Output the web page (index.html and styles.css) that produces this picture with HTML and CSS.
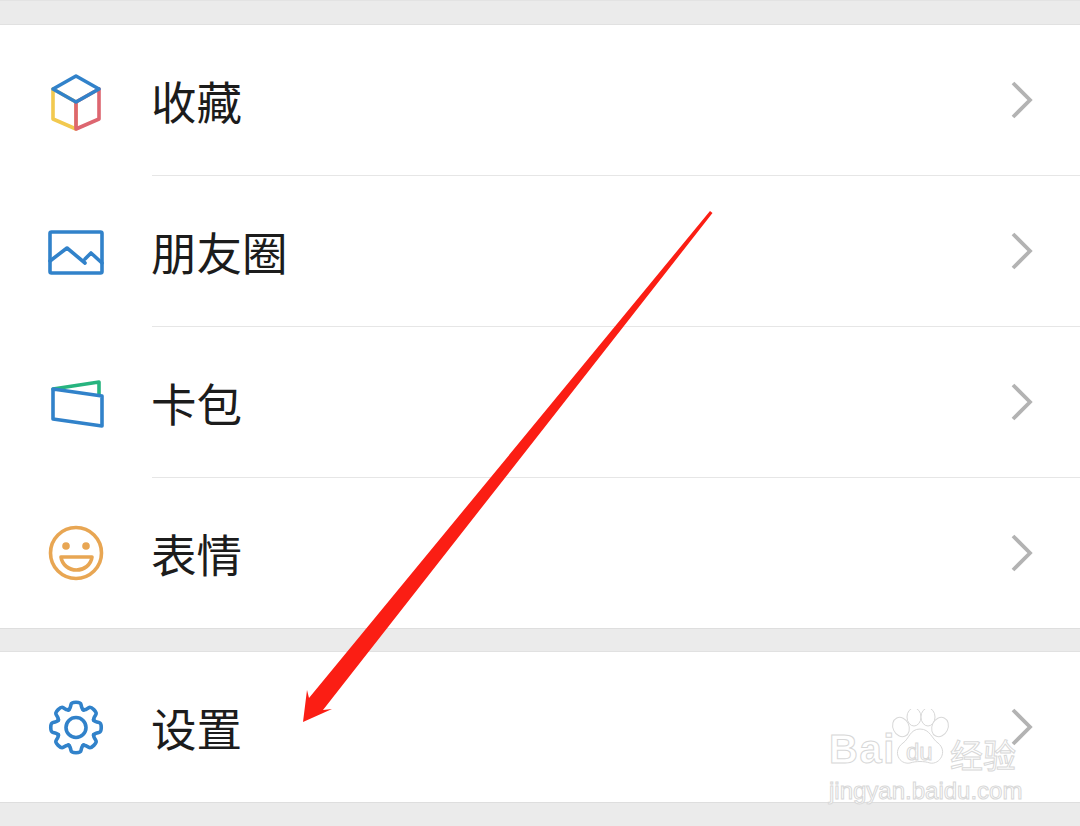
FILE: index.html
```html
<!DOCTYPE html>
<html lang="zh-CN">
<head>
    <meta charset="UTF-8">
    <title>我</title>
    <link rel="stylesheet" href="styles.css">
</head>
<body>
    <div id="page">
        <div class="gap gap-top"></div>
        <div class="group">
            <div class="row">
                <svg class="icon" viewBox="0 0 60 60" width="60" height="60">
                    <path class="line" stroke="#f2c94f" d="M7 18V48L30 58V31Z"/>
                    <path class="line" stroke="#dd6670" d="M53 18V48L30 58V31Z"/>
                    <path class="line" stroke="#3182ca" d="M30 5L7 18L30 31L53 18Z"/>
                </svg>
                <div class="row-body">
                    <span class="label">收藏</span>
                    <svg class="chevron" viewBox="0 0 22 38" width="22" height="38"><path d="M2 2L19 19L2 36"/></svg>
                </div>
            </div>
            <div class="row">
                <svg class="icon" viewBox="0 0 60 60" width="60" height="60">
                    <rect class="line" stroke="#3182ca" x="4" y="10" width="52" height="41" rx="1.5"/>
                    <path class="line" stroke="#3182ca" d="M4 39L21 26L39 41M39 37L45 31L56 41"/>
                </svg>
                <div class="row-body">
                    <span class="label">朋友圈</span>
                    <svg class="chevron" viewBox="0 0 22 38" width="22" height="38"><path d="M2 2L19 19L2 36"/></svg>
                </div>
            </div>
            <div class="row">
                <svg class="icon" viewBox="0 0 60 60" width="60" height="60">
                    <path class="line" stroke="#27b47f" d="M7 16L53 9V22"/>
                    <path class="line" stroke="#3182ca" d="M7 16L56 23V53L7 46Z"/>
                </svg>
                <div class="row-body">
                    <span class="label">卡包</span>
                    <svg class="chevron" viewBox="0 0 22 38" width="22" height="38"><path d="M2 2L19 19L2 36"/></svg>
                </div>
            </div>
            <div class="row row-last">
                <svg class="icon" viewBox="0 0 60 60" width="60" height="60">
                    <circle class="line" stroke="#e8a653" cx="30" cy="30" r="25.5"/>
                    <circle fill="#e8a653" cx="20" cy="23" r="3.8"/>
                    <circle fill="#e8a653" cx="40" cy="23" r="3.8"/>
                    <path class="line" stroke="#e8a653" d="M15 34H46C45 42 38 47 30.500 47C23 47 16 42 15 34Z"/>
                </svg>
                <div class="row-body">
                    <span class="label">表情</span>
                    <svg class="chevron" viewBox="0 0 22 38" width="22" height="38"><path d="M2 2L19 19L2 36"/></svg>
                </div>
            </div>
        </div>
        <div class="gap gap-mid"></div>
        <div class="group">
            <div class="row row-last">
                <svg class="icon" viewBox="0 0 60 60" width="60" height="60">
                    <defs>
                        <path id="tooth" d="M-7.500 -17.500C-6 -18.500 -5.500 -20 -5 -23C-4.500 -26 4.500 -26 5 -23C5.500 -20 6 -18.500 7.500 -17.500"/>
                    </defs>
                    <g class="line" stroke="#3182ca" transform="translate(30 30.500)">
                        <use href="#tooth"/>
                        <use href="#tooth" transform="rotate(45)"/>
                        <use href="#tooth" transform="rotate(90)"/>
                        <use href="#tooth" transform="rotate(135)"/>
                        <use href="#tooth" transform="rotate(180)"/>
                        <use href="#tooth" transform="rotate(225)"/>
                        <use href="#tooth" transform="rotate(270)"/>
                        <use href="#tooth" transform="rotate(315)"/>
                        <circle r="10"/>
                    </g>
                </svg>
                <div class="row-body">
                    <span class="label">设置</span>
                    <svg class="chevron" viewBox="0 0 22 38" width="22" height="38"><path d="M2 2L19 19L2 36"/></svg>
                </div>
            </div>
        </div>
        <div class="gap gap-bottom"></div>

        <!-- red arrow drawn over the screenshot -->
        <svg class="arrow" viewBox="0 0 1080 826" width="1080" height="826">
            <path d="M710 211L712.500 213L323 710L332 709L303 722L307 690L309 698Z"/>
        </svg>

        <div class="watermark">
            <div class="wm-top">
                <span class="wm-bai">Bai</span>
                <svg class="wm-paw" viewBox="0 0 60 60" width="60" height="60">
                    <ellipse cx="11" cy="18" rx="8" ry="10" transform="rotate(-25 11 18)"/>
                    <ellipse cx="24" cy="8" rx="7" ry="9"/>
                    <ellipse cx="38" cy="8" rx="7" ry="9"/>
                    <ellipse cx="50" cy="18" rx="8" ry="10" transform="rotate(25 50 18)"/>
                    <path d="M30 20C40 20 42 30 48 34C58 42 50 56 40 54C34 52 26 52 20 54C9 56 2 42 13 34C19 30 20 20 30 20Z"/>
                </svg>
                <span class="wm-du">du</span>
                <span class="wm-cn">经验</span>
            </div>
            <div class="wm-url">jingyan.baidu.com</div>
        </div>
    </div>
</body>
</html>
```

FILE: styles.css
```css
body {
    margin: 0;
    background-color: #ebebeb;
    font-family: "Noto Sans CJK SC", "Noto Sans", sans-serif;
}
#page {
    position: relative;
    width: 1080px;
    height: 826px;
    overflow: hidden;
}
.gap {
    box-sizing: border-box;
    background-color: #ebebeb;
}
.gap-top {
    height: 25px;
    border-top: 1px solid #e3e3e3;
    border-bottom: 1px solid #e1e1e1;
}
.gap-mid {
    height: 23px;
    border-bottom: 1px solid #e1e1e1;
}
.group {
    background-color: white;
    border-bottom: 1px solid #dedede;
}
.row {
    display: flex;
    align-items: center;
    height: 151px;
}
.row-last {
    height: 150px;
}
.icon {
    flex: none;
    margin-left: 46px;
    margin-right: 46px;
}
.line {
    fill: none;
    stroke-width: 3.600;
    stroke-linejoin: round;
    stroke-linecap: round;
}
.row-body {
    flex: 1;
    box-sizing: border-box;
    height: 100%;
    display: flex;
    align-items: center;
    justify-content: space-between;
    padding-right: 47px;
    border-bottom: 1px solid #e6e6e6;
}
.row-last .row-body {
    border-bottom: none;
}
.label {
    margin-left: -1px;
    font-size: 45.500px;
    color: #1c1c1c;
}
.chevron {
    fill: none;
    stroke: #b3b3b3;
    stroke-width: 3.800;
}
.arrow {
    position: absolute;
    left: 0;
    top: 0;
}
.arrow path {
    fill: #fb1e14;
}
.watermark {
    position: absolute;
    left: 828px;
    top: 708px;
    width: 200px;
    color: white;
    -webkit-text-stroke: 1px #d8d8d8;
    font-family: "Liberation Sans", sans-serif;
}
.wm-top {
    position: relative;
    display: flex;
    align-items: flex-end;
    height: 64px;
}
.wm-bai {
    font-size: 40px;
    font-weight: bold;
    line-height: 46px;
    letter-spacing: 1.500px;
    width: 63px;
    margin-left: 1px;
}
.wm-paw {
    flex: none;
    width: 60px;
    height: 60px;
    margin-left: -2px;
    margin-bottom: 3px;
    fill: white;
    stroke: #d8d8d8;
    stroke-width: 1;
}
.wm-du {
    position: absolute;
    left: 78px;
    bottom: 7px;
    font-size: 24px;
    line-height: 26px;
}
.wm-cn {
    margin-left: 0;
    margin-bottom: -3px;
    font-family: "Noto Sans CJK SC", sans-serif;
    font-size: 33px;
    line-height: 42px;
}
.wm-url {
    margin-top: 5px;
    margin-left: 1px;
    font-size: 24px;
    line-height: 28px;
    white-space: nowrap;
}
```
